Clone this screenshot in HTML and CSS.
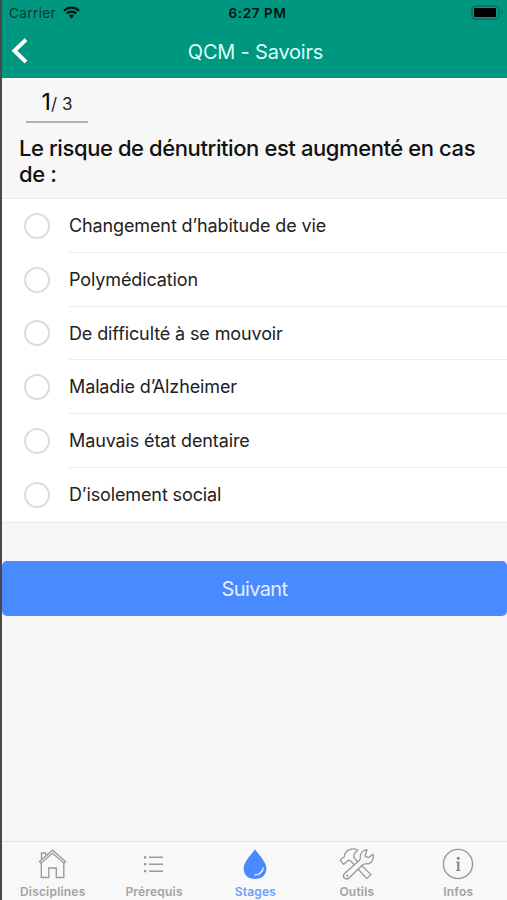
FILE: index.html
```
<!DOCTYPE html>
<html lang="fr">
<head>
    <meta charset="UTF-8">
    <meta name="viewport" content="width=device-width, initial-scale=1.0">
    <title>QCM - Savoirs</title>
    <link rel="stylesheet" href="styles.css">
</head>
<body>
    <header class="header">
        <div class="status-bar">
            <div class="carrier">
                <span>Carrier</span>
                <svg width="17" height="13" viewBox="0 0 17 13" fill="none" stroke="#06150f" stroke-width="2.3">
                    <path d="M1 4.7C5.2.6 11.8.6 16 4.7"/>
                    <path d="M3.7 7.5c2.7-2.6 6.9-2.6 9.6 0"/>
                    <path d="M5.8 9.6c1.5-1.4 3.9-1.4 5.4 0L8.5 12.4z" fill="#06150f" stroke="none"/>
                </svg>
            </div>
            <span class="time">6:27 PM</span>
            <svg class="battery" width="33" height="15" viewBox="0 0 33 15">
                <rect x="1" y="1" width="27" height="13" rx="3.5" fill="none" stroke="#087260" stroke-width="1.6"/>
                <rect x="3" y="3" width="22" height="9" rx="1" fill="#000"/>
                <path d="M30 5c2.2.8 2.2 4.2 0 5z" fill="#087260"/>
            </svg>
        </div>
        <div class="nav-bar">
            <svg class="back" width="18" height="28" viewBox="0 0 18 28" fill="none" stroke="#fff" stroke-width="4">
                <path d="M16 1.6L4.400 12.800 16 24"/>
            </svg>
            <h1>QCM - Savoirs</h1>
        </div>
    </header>

    <main class="content">
        <div class="question">
            <div class="counter"><span class="current">1</span>/ 3</div>
            <h2>Le risque de dénutrition est augmenté en cas de :</h2>
        </div>

        <ul class="answers">
            <li><span class="radio"></span><label>Changement d’habitude de vie</label></li>
            <li><span class="radio"></span><label>Polymédication</label></li>
            <li><span class="radio"></span><label>De difficulté à se mouvoir</label></li>
            <li><span class="radio"></span><label>Maladie d’Alzheimer</label></li>
            <li><span class="radio"></span><label>Mauvais état dentaire</label></li>
            <li><span class="radio"></span><label>D’isolement social</label></li>
        </ul>

        <button class="next-button">Suivant</button>
    </main>

    <nav class="tabs">
        <a class="tab">
            <svg width="36" height="34" viewBox="0 0 36 34" fill="none" stroke="#999" stroke-width="1.3">
                <path d="M4.500 14.600L17.500 3.200l13 11.400-1.500 1.600L17.500 6.300 6 16.200z"/>
                <path d="M6.300 16V30.500h7.500V21h7.500v9.500h7.500V16M6.500 12.600V6h4.200v2.800"/>
            </svg>
            <span>Disciplines</span>
        </a>
        <a class="tab">
            <svg width="36" height="34" viewBox="0 0 36 34" fill="none" stroke="#999" stroke-width="1.4">
                <path d="M13 10.300h14M13 17.200h14M13 24.200h14"/>
                <path d="M8 10.300h2.300M8 17.200h2.300M8 24.200h2.300" stroke-width="2.200"/>
            </svg>
            <span>Prérequis</span>
        </a>
        <a class="tab active">
            <svg width="36" height="34" viewBox="0 0 36 34">
                <path d="M18 2.300c2 3.600 11.400 12.200 11.400 19.200C29.400 28 24.600 32 18 32S6.600 28 6.600 21.500C6.600 14.500 16 5.900 18 2.300z" fill="#488aff"/>
                <path d="M26.200 20.500c.6 5-4 8-9 7.600 4.500-.6 7.500-3 9-7.600z" fill="#f8f8f8" stroke="#f8f8f8" stroke-width=".6"/>
            </svg>
            <span>Stages</span>
        </a>
        <a class="tab">
            <svg width="36" height="34" viewBox="0 0 36 34" fill="none" stroke="#999" stroke-width="1.3" stroke-linejoin="round">
                <path d="M18.800 3.200C16.500 1.800 13 1.600 10.500 2.600 7.500 3.800 5.200 6.500 5.300 10L3.800 10.600 1.200 13.300 4.600 17.300 7.600 14.800c.8-1.700 2.300-2 3.900-1L27.800 31.600l4.200-4L15.600 11.500c-2-3 .2-6.200 3.200-8.300z"/>
                <path d="M28 2.600C23.500 3 20.800 6.800 21.300 10.500c.1 1.200-.1 1.900-.8 2.700L5.500 26.500c-3.200 3.300 1.300 7.500 4.700 4.200L23.800 17.800c1-.9 1.900-1 3.200-.9 5.200.4 8.600-4.800 7-9.600L29.300 10.700l-3.300-1.500z" fill="#f8f8f8"/>
                <circle cx="8.200" cy="28.600" r=".5"/>
            </svg>
            <span>Outils</span>
        </a>
        <a class="tab">
            <svg width="36" height="34" viewBox="0 0 36 34" fill="none" stroke="#999" stroke-width="1.4">
                <circle cx="18" cy="17" r="14.600"/>
                <circle cx="18.200" cy="11.200" r="1.500" fill="#888" stroke="none"/>
                <path d="M16 14.500h3.400v8.500h1.100v1H16v-1h1.200v-7.500H16z" fill="#888" stroke="none"/>
            </svg>
            <span>Infos</span>
        </a>
    </nav>
</body>
</html>
```
FILE: styles.css
```
/* General Styling */
* {
    margin: 0;
    padding: 0;
    box-sizing: border-box;
    font-family: 'Inter', sans-serif;
}

body {
    height: 900px;
    display: flex;
    flex-direction: column;
    background-color: #f7f7f7;
    border-left: 2px solid #47494c;
    overflow: hidden;
}

/* Header */
.header {
    height: 78px;
    background-color: #009780;
}

.status-bar {
    height: 25px;
    padding: 0 3px 0 7px;
    display: grid;
    grid-template-columns: 1fr auto 1fr;
    align-items: center;
    font-size: 13.5px;
    color: #06382f;
}

.carrier {
    display: flex;
    align-items: center;
    gap: 7px;
    letter-spacing: 0.4px;
}

.time {
    padding-left: 2px;
    font-weight: 600;
    letter-spacing: 0.6px;
    color: #04130f;
}

.battery {
    justify-self: end;
}

.nav-bar {
    height: 53px;
    padding: 0 7px 0 8px;
    display: grid;
    grid-template-columns: 30px 1fr 30px;
    align-items: center;
}

.nav-bar h1 {
    padding-left: 1px;
    font-size: 20px;
    font-weight: 400;
    letter-spacing: -0.2px;
    text-align: center;
    color: #dcfff8;
}

/* Question */
.content {
    flex: 1;
}

.question {
    height: 120px;
    padding: 9px 17px 0;
}

.counter {
    width: 62px;
    height: 36px;
    margin-left: 7px;
    border-bottom: 2px solid #b4b4b4;
    font-size: 17px;
    line-height: 30px;
    text-align: center;
    color: #222;
}

.current {
    font-size: 23px;
    color: #000;
}

.question h2 {
    margin-top: 12px;
    font-size: 22px;
    font-weight: 500;
    line-height: 26px;
    letter-spacing: -0.41px;
    color: #111;
}

/* Answers */
.answers {
    list-style: none;
    background-color: #fff;
    border-top: 1px solid #e9e9e9;
    border-bottom: 1px solid #e9e9e9;
}

.answers li {
    height: 53.8px;
    padding-left: 22px;
    display: flex;
    align-items: center;
    gap: 19px;
}

.radio {
    width: 26px;
    height: 26px;
    border: 2px solid #dcdcdc;
    border-radius: 50%;
}

.answers label {
    flex: 1;
    height: 100%;
    border-bottom: 1px solid #ececec;
    font-size: 18px;
    line-height: 54.6px;
    letter-spacing: -0.12px;
    color: #222;
}

.answers li:last-child label {
    border-bottom: none;
}

.next-button {
    width: 100%;
    height: 55px;
    margin-top: 38.4px;
    padding-top: 1px;
    display: block;
    border: none;
    border-radius: 5px;
    background-color: #488aff;
    font-size: 20px;
    letter-spacing: -0.6px;
    color: #e4eeff;
}

/* Tabs */
.tabs {
    height: 59px;
    display: flex;
    border-top: 1px solid #e4e4e4;
    background-color: #f8f8f8;
}

.tab {
    flex: 0 0 101.4px;
    padding-top: 5px;
    display: flex;
    flex-direction: column;
    align-items: center;
    font-size: 12px;
    font-weight: 600;
    color: #a2a2a2;
}

.tab span {
    margin-top: 3px;
    line-height: 15px;
    letter-spacing: 0.2px;
}

.tab.active {
    color: #6d9ff8;
}
```
